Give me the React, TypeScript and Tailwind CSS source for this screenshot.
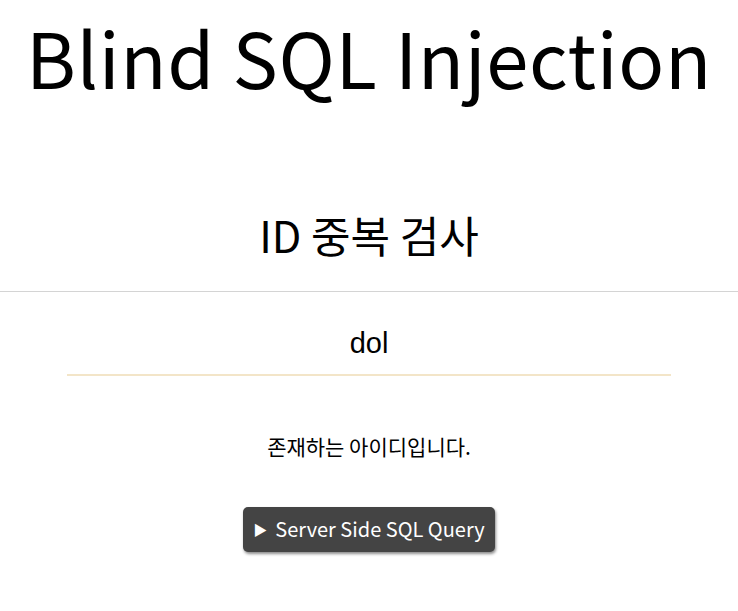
import React, { useState } from 'react';

// 아이디 중복 검사 페이지 (Blind SQL Injection 실습용)
export default function App() {
  const [id, setId] = useState('dol');

  return (
    <div
      className="min-h-screen bg-white text-black flex flex-col"
      style={{ fontFamily: '"Noto Sans CJK KR", "Open Sans", sans-serif' }}
    >
      <h1 className="h-[112px] flex items-center justify-center text-[76px] leading-none font-normal tracking-[0.6px]">
        Blind SQL Injection
      </h1>

      <h2 className="mt-[66px] h-[113px] flex items-center justify-center text-[43px] font-normal">
        ID 중복 검사
      </h2>

      <hr className="border-t border-[#d4d4d4]" />

      <div className="flex justify-center pt-[20px]">
        <input
          value={id}
          onChange={(e) => setId(e.target.value)}
          className="w-[604px] h-[64px] text-center text-[29px] outline-none border-b-2 border-[#f3e5c8]"
          style={{ fontFamily: '"Liberation Sans", Arial, sans-serif' }}
        />
      </div>

      <p className="mt-[55px] text-center text-[21px]">존재하는 아이디입니다.</p>

      <div className="flex justify-center mt-[44px]">
        <button className="w-[252px] h-[45px] rounded-[5px] bg-[#444444] text-white text-[20px] font-normal shadow-[1px_2px_3px_rgba(0,0,0,0.45)] flex items-center justify-center gap-[8px]">
          <span className="text-[14px]">▶</span>
          <span>Server Side SQL Query</span>
        </button>
      </div>
    </div>
  );
}
